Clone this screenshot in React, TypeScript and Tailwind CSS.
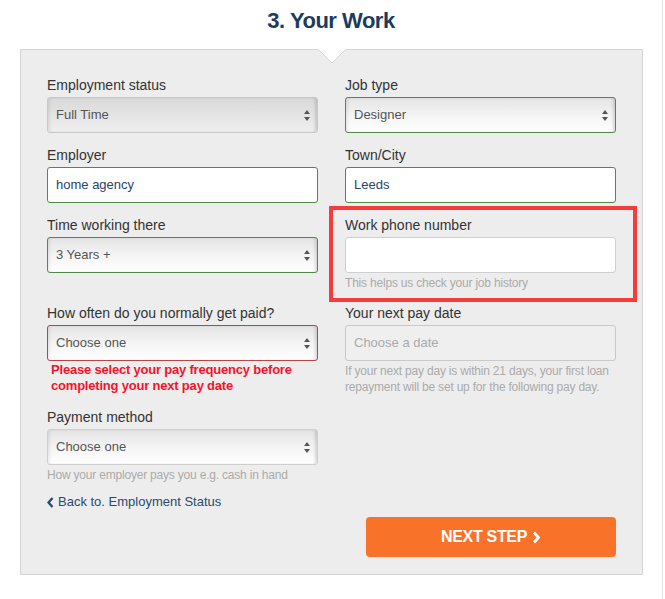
import React from 'react';

const font = { fontFamily: '"Liberation Sans", Arial, sans-serif' };

function Arrows() {
  return (
    <svg width="6" height="11" viewBox="0 0 6 11" className="shrink-0">
      <path d="M3 0 L6 4 L0 4 Z" fill="#555" />
      <path d="M0 7 L6 7 L3 11 Z" fill="#555" />
    </svg>
  );
}

type Tone = 'ok' | 'plain' | 'error' | 'disabled';

const borderFor: Record<Tone, string> = {
  ok: 'border-[#4f8a47]',
  plain: 'border-[#cfcfcf]',
  error: 'border-[#b4454a]',
  disabled: 'border-[#c9c9c9]',
};

function Select({ value, tone }: { value: string; tone: Tone }) {
  return (
    <div
      className={
        'flex h-9 items-center justify-between rounded-[3px] border pl-2 pr-[7px] text-[13px] text-[#555] ' +
        borderFor[tone] +
        (tone === 'disabled'
          ? ' bg-gradient-to-b from-[#d9d9d9] to-[#efefef]'
          : ' bg-gradient-to-b from-[#e4e4e4] via-[#f4f4f4] to-white') +
        ' shadow-[inset_-3px_0_3px_-1px_rgba(0,0,0,0.14),inset_3px_0_3px_-1px_rgba(0,0,0,0.07)]'
      }
    >
      <span>{value}</span>
      <Arrows />
    </div>
  );
}

function Input({ value, tone, placeholder }: { value?: string; tone: Tone; placeholder?: string }) {
  return (
    <div
      className={
        'flex h-9 items-center rounded-[3px] border px-2 text-[13px] ' +
        borderFor[tone] +
        (tone === 'disabled' ? ' bg-[#efefef]' : ' bg-white')
      }
    >
      {value ? (
        <span className="text-[#2a4468]">{value}</span>
      ) : (
        <span className="text-[#aaa]">{placeholder}</span>
      )}
    </div>
  );
}

function Field({ label, children }: { label: string; children: React.ReactNode }) {
  return (
    <div className="flex flex-col">
      <label className="mb-[3px] text-[14px] leading-[17px] text-[#333]">{label}</label>
      {children}
    </div>
  );
}

function Help({ children }: { children: React.ReactNode }) {
  return (
    <p className="mt-[2px] whitespace-nowrap text-[12px] leading-4 tracking-[-0.2px] text-[#ababab]">
      {children}
    </p>
  );
}

export default function App() {
  return (
    <div style={font} className="min-h-[599px] w-[663px] border-r border-[#e3e3e3] bg-white pt-[7px]">
      <h1 className="text-center text-[22px] font-bold leading-[28px] tracking-[-0.5px] text-[#1c3c5e]">
        3. Your Work
      </h1>

      <div className="relative ml-[20px] mt-[14px] w-[623px] border border-[#d6d6d6] bg-[#ededed] px-[26px] pb-[17px] pt-[27px]">
        {/* notch */}
        <svg
          width="28"
          height="15"
          viewBox="0 0 28 15"
          className="absolute left-1/2 top-[-1px] -translate-x-1/2"
        >
          <path d="M0 0 L14 14 L28 0 Z" fill="#fff" />
          <path d="M0.5 0.5 L14 14 L27.5 0.5" fill="none" stroke="#d6d6d6" strokeWidth="1" />
        </svg>

        <div className="grid grid-cols-2 gap-x-[27px] gap-y-[14px]">
          <Field label="Employment status">
            <Select value="Full Time" tone="disabled" />
          </Field>
          <Field label="Job type">
            <Select value="Designer" tone="ok" />
          </Field>

          <Field label="Employer">
            <Input value="home agency" tone="ok" />
          </Field>
          <Field label="Town/City">
            <Input value="Leeds" tone="ok" />
          </Field>

          <Field label="Time working there">
            <Select value="3 Years +" tone="ok" />
          </Field>
          <Field label="Work phone number">
            <Input tone="plain" />
            <Help>This helps us check your job history</Help>
          </Field>

          <Field label="How often do you normally get paid?">
            <Select value="Choose one" tone="error" />
            <p className="mt-[1px] pl-1 text-[13px] font-bold leading-4 tracking-[-0.2px] text-[#f5132b]">
              Please select your pay frequency before
              <br />
              completing your next pay date
            </p>
          </Field>
          <Field label="Your next pay date">
            <Input tone="disabled" placeholder="Choose a date" />
            <Help>
              If your next pay day is within 21 days, your first loan
              <br />
              repayment will be set up for the following pay day.
            </Help>
          </Field>

          <Field label="Payment method">
            <Select value="Choose one" tone="plain" />
            <Help>How your employer pays you e.g. cash in hand</Help>
          </Field>
          <div />
        </div>

        <a className="mt-[11px] flex items-center gap-[4px] text-[13px] leading-4 text-[#2b4a70]">
          <svg width="7" height="11" viewBox="0 0 7 11">
            <path d="M5.5 1 L1.5 5.5 L5.5 10" fill="none" stroke="#2b4a70" strokeWidth="2.4" />
          </svg>
          Back to. Employment Status
        </a>

        <div className="mt-[7px] flex justify-end">
          <button className="flex h-10 w-[250px] items-center justify-center gap-[5px] rounded-[4px] bg-[#f97229] text-[16px] font-bold tracking-[-0.3px] text-white">
            NEXT STEP
            <svg width="9" height="13" viewBox="0 0 9 13">
              <path d="M2 1.5 L6.5 6.5 L2 11.5" fill="none" stroke="#fff" strokeWidth="2.8" />
            </svg>
          </button>
        </div>

        {/* highlight annotation */}
        <div className="pointer-events-none absolute left-[308px] top-[156px] h-[96px] w-[308px] border-4 border-[#f33c3c]" />
      </div>
    </div>
  );
}
